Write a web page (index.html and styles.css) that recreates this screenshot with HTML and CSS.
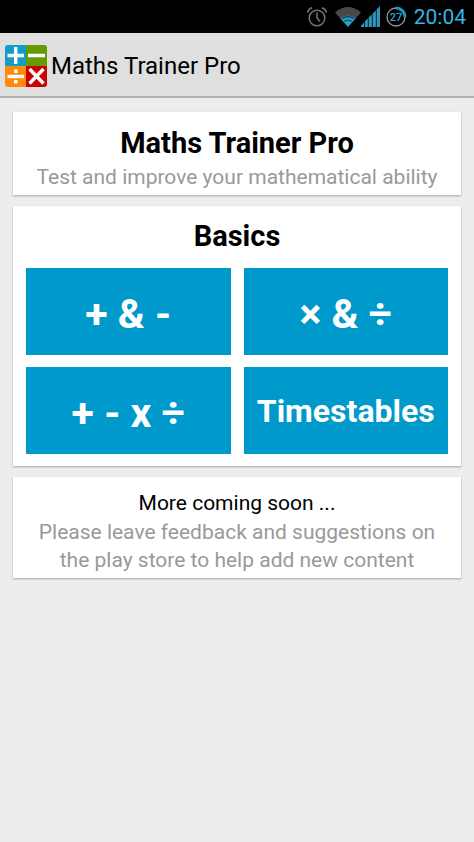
FILE: index.html
```html
<!DOCTYPE html>
<html lang="en">
<head>
<meta charset="utf-8">
<meta name="viewport" content="width=device-width, initial-scale=1">
<title>Maths Trainer Pro</title>
<link rel="stylesheet" href="styles.css">
</head>
<body>
<div class="status-bar">
  <svg class="alarm" width="22" height="22" viewBox="0 0 22 22" fill="none" stroke="#777" stroke-width="1.5" aria-hidden="true">
    <circle cx="11" cy="12" r="7.8"/>
    <path d="M11 6.5V12l3 3.500M1.500 6.500Q2.500 3 6 1.800M20.500 6.500Q19.500 3 16 1.800"/>
  </svg>
  <svg class="wifi" width="26" height="21" viewBox="0 0 26 21" aria-hidden="true">
    <path d="M0 6.500Q13-4.500 26 6.500L13 21Z" fill="#484848"/>
    <path d="M5.500 12.600Q13 6.500 20.500 12.600L13 21Z" fill="#2a9fc4"/>
    <path d="M7 12.800Q13 8.500 19 12.800M9.500 15.500Q13 12.500 16.500 15.500" fill="none" stroke="#0b3d50" stroke-width="1.200"/>
  </svg>
  <svg class="signal" width="20" height="21" viewBox="0 0 20 21" fill="#2d95b8" aria-hidden="true">
    <path d="M0 21V19.500L3 16.500V21ZM3.700 21V15.500L6.900 12.500V21ZM7.600 21V11.500L10.900 8.500V21ZM11.600 21V7.500L14.900 4.500V21ZM15.600 21V3.500L19 0V21Z"/>
  </svg>
  <svg class="battery" width="22" height="22" viewBox="0 0 22 22" fill="none" aria-hidden="true">
    <circle cx="11" cy="11" r="9" stroke="#999" stroke-width="1.300"/>
    <path d="M11 2A9 9 0 0 1 20 11" stroke="#1599c4" stroke-width="3"/>
    <text class="battery-level" x="11" y="15" text-anchor="middle">27</text>
  </svg>
  <span class="clock">20:04</span>
</div>
<header class="app-bar">
  <svg width="42" height="42" viewBox="0 0 42 42" aria-hidden="true">
    <path d="M3 0H21V21H0V3Q0 0 3 0Z" fill="#139bca"/>
    <path d="M21 0H39Q42 0 42 3V21H21Z" fill="#639b00"/>
    <path d="M0 21H21V42H3Q0 42 0 39Z" fill="#ff8a0a"/>
    <path d="M21 21H42V39Q42 42 39 42H21Z" fill="#cc0202"/>
    <path d="M2.500 10.500H19M10.700 2V19M23 10.500H40M2.500 31.500H19M24.500 24L38.500 38.500M38.500 24L24.500 38.500" fill="none" stroke="#fff" stroke-width="3.400"/>
    <path d="M9 24.500h3.600v3.600H9ZM9 35h3.600v3.600H9Z" fill="#fff"/>
  </svg>
  <span class="app-title">Maths Trainer Pro</span>
</header>
<main class="content">
  <section class="card">
    <h1 class="heading">Maths Trainer Pro</h1>
    <p class="note">Test and improve your mathematical ability</p>
  </section>
  <section class="card basics">
    <h2 class="heading">Basics</h2>
    <div class="modes">
      <button class="mode" type="button">+ &amp; -</button>
      <button class="mode" type="button">× &amp; ÷</button>
      <button class="mode" type="button">+ - x ÷</button>
      <button class="mode mode-word" type="button">Timestables</button>
    </div>
  </section>
  <section class="card">
    <h2 class="subheading">More coming soon ...</h2>
    <p class="note">Please leave feedback and suggestions on the play store to help add new content</p>
  </section>
</main>
</body>
</html>
```
FILE: styles.css
```css
* {
  box-sizing: border-box;
}

body {
  margin: 0;
  background: #ededed;
  color: #000;
  font-family: Roboto, "Liberation Sans", sans-serif;
}

h1, h2, p {
  margin: 0;
}

.status-bar {
  display: flex;
  align-items: center;
  justify-content: flex-end;
  height: 33px;
  padding-right: 8px;
  background: #000;
}

.wifi {
  margin-left: 7px;
}

.battery {
  margin: 0 7px 0 4px;
}

.battery-level {
  fill: #2ba6cf;
  font-size: 11px;
  font-weight: 500;
}

.clock {
  color: #33b5e5;
  font-size: 21px;
}

.app-bar {
  display: flex;
  align-items: center;
  gap: 4px;
  height: 65px;
  padding: 3px 5px 0;
  background: #dfdfdf;
  border-bottom: 2px solid #b1b1b1;
}

.app-title {
  font-size: 24px;
}

.content {
  display: flex;
  flex-direction: column;
  gap: 11px;
  padding: 14px 13px;
}

.card {
  padding: 12px 13px 4px;
  background: #fff;
  box-shadow: 0 1px 2px rgba(0, 0, 0, 0.3);
  text-align: center;
}

.heading {
  font-size: 29px;
  font-weight: 700;
  line-height: 39px;
}

.subheading {
  font-size: 21px;
  font-weight: 400;
  line-height: 29px;
}

.note {
  color: #999;
  font-size: 21px;
  line-height: 28px;
}

.basics {
  padding-top: 11px;
  padding-bottom: 12px;
}

.modes {
  display: grid;
  grid-template-columns: 1fr 1fr;
  gap: 12px 13px;
  margin-top: 12px;
}

.mode {
  height: 87px;
  padding: 5px 0 0;
  border: 0;
  background: #0099cc;
  color: #fff;
  font-family: inherit;
  font-size: 41px;
  font-weight: 700;
}

.mode-word {
  padding-top: 0;
  font-size: 32px;
}
```
